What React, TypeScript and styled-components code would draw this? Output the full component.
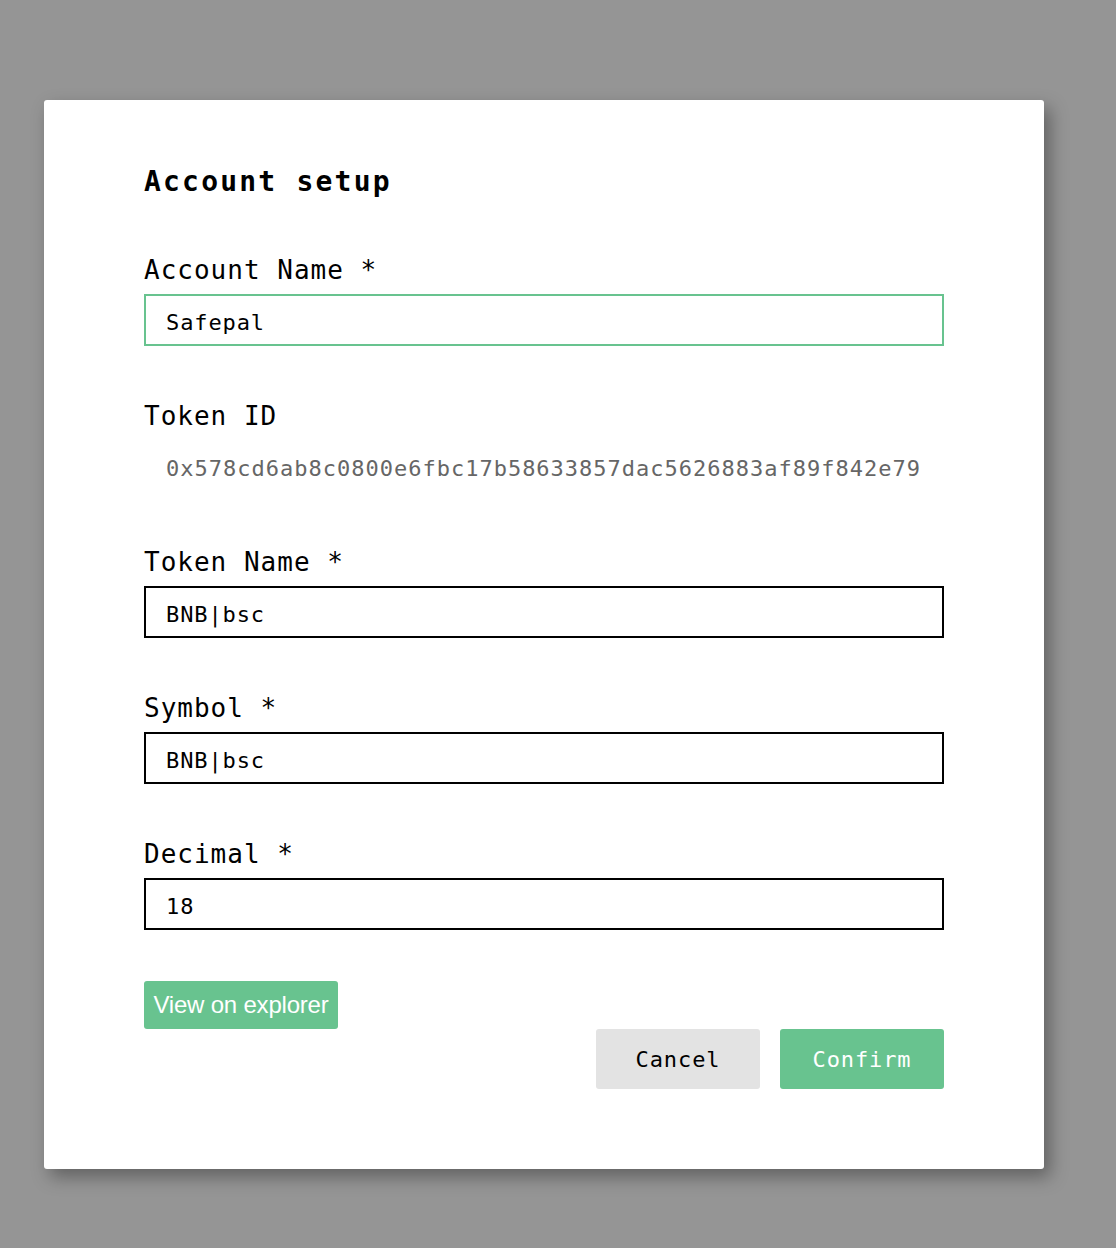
import React from "react";
import styled, { createGlobalStyle } from "styled-components";

const Global = createGlobalStyle`
  html, body { margin: 0; padding: 0; }
  body {
    background: #959595;
    font-family: "DejaVu Sans Mono", "Liberation Mono", monospace;
    min-height: 1248px;
  }
  * { box-sizing: border-box; }
`;

const Page = styled.div`
  padding: 100px 0 80px 44px;
`;

const Modal = styled.div`
  width: 1000px;
  background: #fff;
  border-radius: 3px;
  box-shadow: 6px 8px 18px rgba(0, 0, 0, 0.35);
  padding: 65px 100px 80px 100px;
  display: flex;
  flex-direction: column;
`;

const Title = styled.h2`
  margin: 0 0 52px 0;
  font-size: 28px;
  line-height: 34px;
  font-weight: bold;
  letter-spacing: 2.2px;
  color: #000;
`;

const Field = styled.div`
  display: flex;
  flex-direction: column;
  gap: 7px;
  margin-bottom: 51px;
  &:last-of-type { margin-bottom: 48px; }
`;

const Label = styled.label`
  padding-top: 2px;
  font-size: 26px;
  line-height: 34px;
  letter-spacing: 1px;
  color: #000;
  white-space: pre;
`;

const Input = styled.div<{ $focused?: boolean }>`
  height: 52px;
  border: 2px solid ${(p) => (p.$focused ? "#68c38f" : "#000")};
  padding: 4px 20px 0 20px;
  display: flex;
  align-items: center;
  font-size: 22px;
  letter-spacing: 0.9px;
  color: #000;
`;

const ReadOnly = styled.div`
  height: 52px;
  margin: 0 22px;
  padding-top: 4px;
  display: flex;
  align-items: center;
  font-size: 22px;
  letter-spacing: 1px;
  color: #666;
  white-space: nowrap;
  overflow: hidden;
`;

const ExplorerButton = styled.button`
  align-self: flex-start;
  height: 48px;
  width: 194px;
  border: none;
  border-radius: 3px;
  background: #68c38f;
  color: #fff;
  font-family: "Liberation Sans", Arial, sans-serif;
  font-size: 24px;
  letter-spacing: -0.2px;
  padding: 0;
  cursor: pointer;
`;

const Actions = styled.div`
  display: flex;
  justify-content: flex-end;
  gap: 20px;
`;

const ActionButton = styled.button<{ $primary?: boolean }>`
  width: 164px;
  height: 60px;
  border: none;
  border-radius: 3px;
  background: ${(p) => (p.$primary ? "#68c38f" : "#e3e3e3")};
  color: ${(p) => (p.$primary ? "#fff" : "#000")};
  font-family: "DejaVu Sans Mono", "Liberation Mono", monospace;
  font-size: 22px;
  letter-spacing: 0.9px;
  cursor: pointer;
`;

export default function App() {
  return (
    <Page>
      <Global />
      <Modal>
        <Title>Account setup</Title>
        <Field>
          <Label>{"Account Name *"}</Label>
          <Input $focused>Safepal</Input>
        </Field>
        <Field>
          <Label>Token ID</Label>
          <ReadOnly>0x578cd6ab8c0800e6fbc17b58633857dac5626883af89f842e79f3a1c</ReadOnly>
        </Field>
        <Field>
          <Label>{"Token Name *"}</Label>
          <Input>BNB|bsc</Input>
        </Field>
        <Field>
          <Label>{"Symbol *"}</Label>
          <Input>BNB|bsc</Input>
        </Field>
        <Field>
          <Label>{"Decimal *"}</Label>
          <Input>18</Input>
        </Field>
        <ExplorerButton>View on explorer</ExplorerButton>
        <Actions>
          <ActionButton>Cancel</ActionButton>
          <ActionButton $primary>Confirm</ActionButton>
        </Actions>
      </Modal>
    </Page>
  );
}
